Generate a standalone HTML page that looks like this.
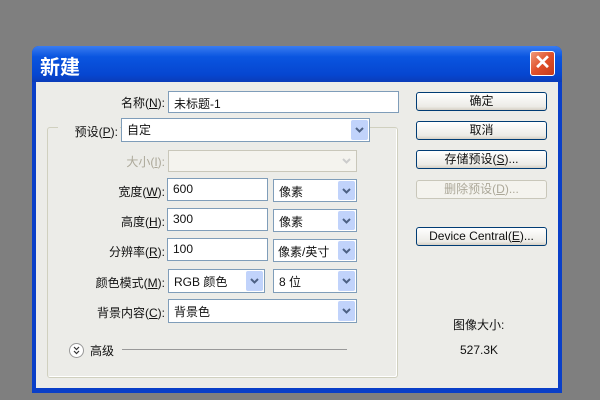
<!DOCTYPE html><html><head><meta charset="utf-8"><style>
*{box-sizing:border-box;margin:0;padding:0}
body{width:600px;height:400px;background:#7f7f7f;position:relative;overflow:hidden;font-family:"Liberation Sans","Noto Sans CJK SC",sans-serif;font-size:12px;color:#111}
.a{position:absolute}
.dlg{left:32px;top:46px;width:530px;height:347px;background:#0a3fc8;border-radius:7px 7px 0 0}
.title{left:32px;top:46px;width:530px;height:36px;background:linear-gradient(#3a7cf0,#0a55e0 30%,#0646d0 80%,#0a3cb8);border-radius:7px 7px 0 0;color:#fff;font-size:20px;font-weight:bold;padding:5px 0 0 8px}
.client{left:36px;top:82px;width:522px;height:306px;background:#ecece8}
.lbl{text-align:right;width:130px;font-size:12px}
.in{background:#fff;border:1px solid #7f9db9;padding:3px 5px;font-size:12px}
.sel{background:#fff;border:1px solid #7f9db9;padding:3px 5px;font-size:12px}
.sel i{position:absolute;right:1px;top:1px;bottom:1px;width:17px;background:#c1d3fb;border-radius:2px}
.sel i svg{position:absolute;left:4px;top:50%;margin-top:-3px}
.btn{left:416px;width:131px;height:19px;border:1px solid #003c74;border-radius:3px;background:linear-gradient(#fff,#ecebe6 80%,#d6d0c5);text-align:center;font-size:12px;line-height:17px}
</style></head><body>
<div class="a dlg"></div>
<div class="a title">新建</div>
<div class="a" style="left:530px;top:51px;width:25px;height:25px;border:1px solid #fff;border-radius:3px;background:linear-gradient(135deg,#f09a7a,#e0502a 50%,#c63a1a);color:#fff;font-size:20px;text-align:center;line-height:22px;font-weight:bold">✕</div>
<div class="a client"></div>
<div class="a" style="left:47px;top:127px;width:351px;height:251px;border:1px solid #d0d0bf;border-radius:3px;box-shadow:inset -1px -1px 0 #fff"></div>
<div class="a lbl" style="left:35px;top:94px">名称(<u>N</u>):</div>
<div class="a in" style="left:168px;top:91px;width:231px;height:22px">未标题-1</div>
<div class="a" style="left:58px;top:118px;width:62px;height:24px;background:#ecece8"></div>
<div class="a lbl" style="left:-12px;top:123px">预设(<u>P</u>):</div>
<div class="a sel" style="left:121px;top:118px;width:249px;height:24px;line-height:16px">自定<i><svg width="9" height="6"><path d="M1 1L4.5 4.5 8 1" stroke="#4d6185" stroke-width="2" fill="none"/></svg></i></div>
<div class="a lbl" style="left:35px;top:153px;color:#aca899">大小(<u>I</u>):</div>
<div class="a sel" style="left:168px;top:150px;width:189px;height:22px;background:#f4f3ee;border-color:#c9c7ba"><i style="background:none"><svg width="9" height="6"><path d="M1 1L4.5 4.5 8 1" stroke="#ccc" stroke-width="2" fill="none"/></svg></i></div>
<div class="a lbl" style="left:35px;top:183px">宽度(<u>W</u>):</div>
<div class="a in" style="left:167px;top:178px;width:101px;height:23px">600</div>
<div class="a sel" style="left:273px;top:179px;width:84px;height:23px">像素<i><svg width="9" height="6"><path d="M1 1L4.5 4.5 8 1" stroke="#4d6185" stroke-width="2" fill="none"/></svg></i></div>
<div class="a lbl" style="left:35px;top:213px">高度(<u>H</u>):</div>
<div class="a in" style="left:167px;top:208px;width:101px;height:23px">300</div>
<div class="a sel" style="left:273px;top:209px;width:84px;height:23px">像素<i><svg width="9" height="6"><path d="M1 1L4.5 4.5 8 1" stroke="#4d6185" stroke-width="2" fill="none"/></svg></i></div>
<div class="a lbl" style="left:35px;top:243px">分辨率(<u>R</u>):</div>
<div class="a in" style="left:167px;top:238px;width:101px;height:23px">100</div>
<div class="a sel" style="left:273px;top:239px;width:84px;height:23px;padding-left:4px">像素/英寸<i><svg width="9" height="6"><path d="M1 1L4.5 4.5 8 1" stroke="#4d6185" stroke-width="2" fill="none"/></svg></i></div>
<div class="a lbl" style="left:35px;top:274px">颜色模式(<u>M</u>):</div>
<div class="a sel" style="left:168px;top:269px;width:97px;height:24px">RGB 颜色<i><svg width="9" height="6"><path d="M1 1L4.5 4.5 8 1" stroke="#4d6185" stroke-width="2" fill="none"/></svg></i></div>
<div class="a sel" style="left:273px;top:269px;width:84px;height:24px">8 位<i><svg width="9" height="6"><path d="M1 1L4.5 4.5 8 1" stroke="#4d6185" stroke-width="2" fill="none"/></svg></i></div>
<div class="a lbl" style="left:35px;top:304px">背景内容(<u>C</u>):</div>
<div class="a sel" style="left:168px;top:299px;width:189px;height:24px">背景色<i><svg width="9" height="6"><path d="M1 1L4.5 4.5 8 1" stroke="#4d6185" stroke-width="2" fill="none"/></svg></i></div>
<div class="a" style="left:69px;top:343px;width:15px;height:15px;border:1px solid #999;border-radius:50%;background:#fff"><svg width="13" height="13" style="position:absolute;left:0;top:0"><path d="M4 3L6.5 5.5 9 3M4 7L6.5 9.5 9 7" stroke="#333" stroke-width="1.2" fill="none"/></svg></div>
<div class="a" style="left:90px;top:342px">高级</div>
<div class="a" style="left:122px;top:349px;width:225px;height:1px;background:#999"></div>
<div class="a btn" style="top:92px">确定</div>
<div class="a btn" style="top:121px">取消</div>
<div class="a btn" style="top:150px">存储预设(<u>S</u>)...</div>
<div class="a btn" style="top:180px;border-color:#c9c7ba;color:#aca899;background:#f4f3ee">删除预设(<u>D</u>)...</div>
<div class="a btn" style="top:227px">Device Central(<u>E</u>)...</div>
<div class="a" style="left:453px;top:316px">图像大小:</div>
<div class="a" style="left:460px;top:343px">527.3K</div>
</body></html>
